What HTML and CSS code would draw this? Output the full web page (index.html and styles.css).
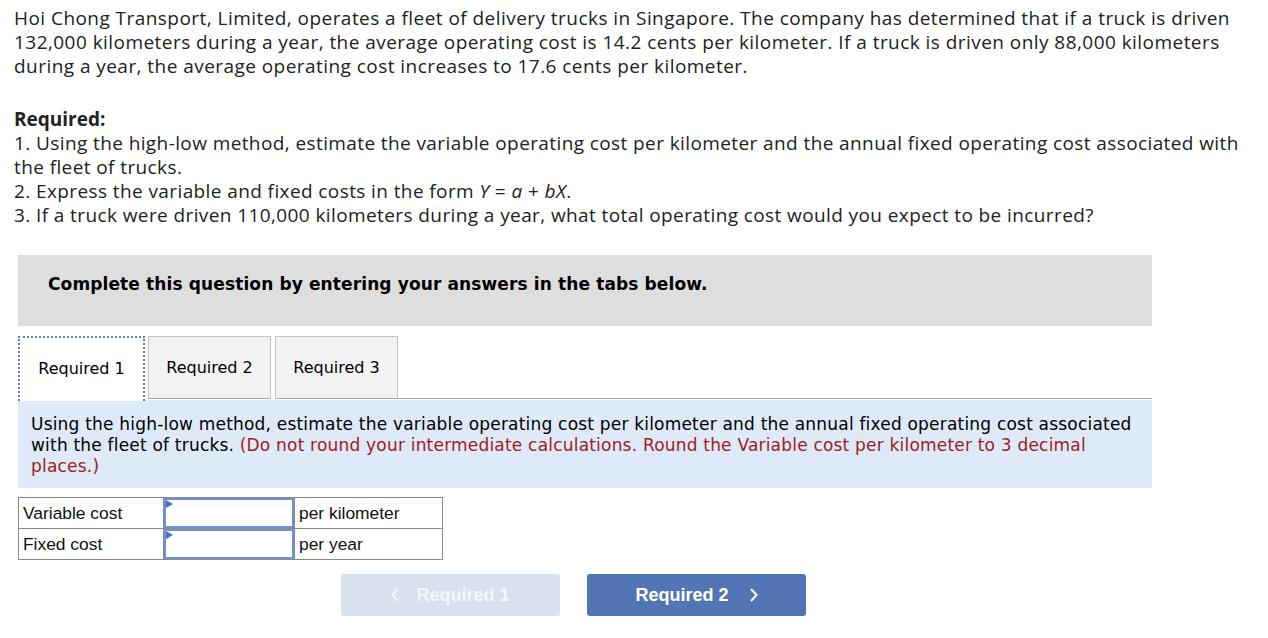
FILE: index.html
```html
<!DOCTYPE html>
<html>
<head>
<meta charset="utf-8">
<link rel="stylesheet" href="styles.css">
</head>
<body>
<div class="page">
  <p class="intro">Hoi Chong Transport, Limited, operates a fleet of delivery trucks in Singapore. The company has determined that if a truck is driven 132,000 kilometers during a year, the average operating cost is 14.2 cents per kilometer. If a truck is driven only 88,000 kilometers during a year, the average operating cost increases to 17.6 cents per kilometer.</p>
  <div class="req">
    <div class="req-title">Required:</div>
    <div>1. Using the high-low method, estimate the variable operating cost per kilometer and the annual fixed operating cost associated with the fleet of trucks.</div>
    <div>2. Express the variable and fixed costs in the form <i>Y</i> = <i>a</i> + <i>bX</i>.</div>
    <div>3. If a truck were driven 110,000 kilometers during a year, what total operating cost would you expect to be incurred?</div>
  </div>

  <div class="question">
    <div class="banner">Complete this question by entering your answers in the tabs below.</div>
    <div class="tabs">
      <div class="tab active">Required 1</div>
      <div class="tab">Required 2</div>
      <div class="tab">Required 3</div>
      <div class="tab-fill"></div>
    </div>
    <div class="instr">Using the high-low method, estimate the variable operating cost per kilometer and the annual fixed operating cost associated with the fleet of trucks. <span class="note">(Do not round your intermediate calculations. Round the Variable cost per kilometer to 3 decimal places.)</span></div>

    <table class="answers">
      <tr>
        <td class="label">Variable cost</td>
        <td class="input"><div class="box"></div></td>
        <td class="unit">per kilometer</td>
      </tr>
      <tr>
        <td class="label">Fixed cost</td>
        <td class="input"><div class="box"></div></td>
        <td class="unit">per year</td>
      </tr>
    </table>

    <div class="nav">
      <div class="btn prev"><svg class="chev" width="8" height="14" viewBox="0 0 8 14"><path d="M7 1 L1.5 7 L7 13" fill="none" stroke="currentColor" stroke-width="2"/></svg><span>Required 1</span></div>
      <div class="btn next"><span>Required 2</span><svg class="chev" width="8" height="14" viewBox="0 0 8 14"><path d="M1 1 L6.5 7 L1 13" fill="none" stroke="currentColor" stroke-width="2"/></svg></div>
    </div>
  </div>
</div>
</body>
</html>
```

FILE: styles.css
```css
* { box-sizing: border-box; }
body {
  margin: 0;
  background: #fff;
  color: #222;
}
.page {
  padding: 6px 0 0 14px;
  width: 1260px;
}
.intro {
  margin: 0;
  font-family: "Open Sans", sans-serif;
  font-size: 19px;
  letter-spacing: 0.45px;
  line-height: 24px;
  width: 1238px;
}
.req {
  margin-top: 29px;
  font-family: "Open Sans", sans-serif;
  font-size: 19px;
  letter-spacing: 0.4px;
  line-height: 24px;
  width: 1240px;
}
.req-title { font-weight: bold; letter-spacing: 0; }
.question {
  margin-top: 28px;
  margin-left: 4px;
  width: 1134px;
  font-family: "DejaVu Sans", Verdana, sans-serif;
  color: #000;
}
.banner {
  height: 71px;
  background: #dedede;
  font-weight: bold;
  font-size: 17px;
  letter-spacing: 0.12px;
  padding-left: 30px;
  display: flex;
  align-items: center;
  padding-bottom: 14px;
}
.tabs {
  margin-top: 10px;
  display: flex;
  align-items: flex-end;
  height: 63px;
}
.tab {
  height: 63px;
  border: 1px solid #c4c4c4;
  border-bottom: 1px solid #a8a8a8;
  background: #f2f2f2;
  font-size: 16px;
  display: flex;
  align-items: center;
  justify-content: center;
  width: 123px;
  margin-right: 4px;
}
.tab.active {
  background: #fff;
  width: 127px;
  margin-right: 3px;
  border: 2px dotted #5b7fc0;
  border-bottom: none;
  height: 65px;
  margin-bottom: -2px;
  padding-bottom: 3px;
}
.tab-fill {
  flex: 1;
  border-bottom: 1px solid #a8a8a8;
  margin-left: -4px;
}
.instr {
  margin-top: 1px;
  background: #deeaf8;
  font-size: 17px;
  letter-spacing: 0.2px;
  line-height: 21px;
  padding: 14px 13px 11px 13px;
  color: #000;
}
.note { color: #a11a1a; }
.answers {
  margin-top: 9px;
  border-collapse: collapse;
  font-family: "Liberation Sans", Arial, sans-serif;
  font-size: 17.4px;
  color: #111;
}
.answers td {
  border: 1px solid #8a8a8a;
  height: 30px;
  padding: 0 4px;
}
.answers td.label { width: 145px; }
.answers td.unit { width: 148px; }
.answers td.input { width: 131px; padding: 0; }
.box {
  height: 30px;
  border: 2px solid #6f92d1;
  position: relative;
}
.box::before {
  content: "";
  position: absolute;
  left: 0;
  top: 0;
  border-left: 7px solid #4a72c0;
  border-top: 4px solid transparent;
  border-bottom: 4px solid transparent;
}
.nav {
  margin-top: 14px;
  margin-left: 323px;
  display: flex;
  gap: 27px;
  font-family: "Liberation Sans", Arial, sans-serif;
}
.btn {
  width: 219px;
  height: 42px;
  border-radius: 3px;
  color: #fff;
  font-weight: bold;
  font-size: 18px;
  display: flex;
  align-items: center;
  justify-content: center;
}
.btn.prev { background: #d8e2ee; color: #f4f7fb; }
.btn.next { background: #5275b6; }
.chev { display: block; }
.prev .chev { margin-right: 17px; }
.next .chev { margin-left: 21px; }
```
